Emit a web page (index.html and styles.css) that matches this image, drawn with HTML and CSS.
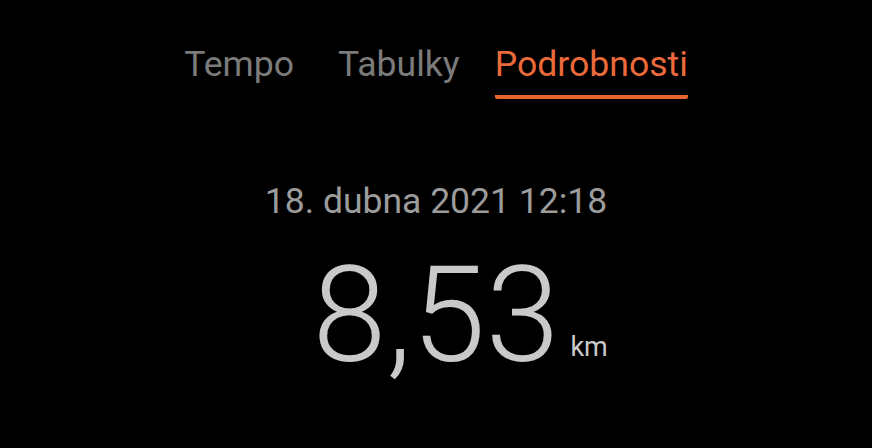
FILE: index.html
```html
<!doctype html>
<html lang="cs">
  <head>
    <meta charset="utf-8" />
    <title>Podrobnosti</title>
    <link rel="stylesheet" href="styles.css">
  </head>
  <body>
	<nav class="tabs">
		<a class="tab">Tempo</a>
		<a class="tab">Tabulky</a>
		<a class="tab active">Podrobnosti</a>
	</nav>
	<div class="date">18. dubna 2021 12:18</div>
	<div class="distance">
		<span class="value">8,53<span class="unit">km</span></span>
	</div>
  </body>
</html>
```

FILE: styles.css
```css
* {
	font-family: Roboto, "Noto Sans", sans-serif;
}

body {
	margin: 0;
	background: #000;
	width: 872px;
	height: 448px;
	overflow: hidden;
}

.tabs {
	display: flex;
	justify-content: center;
	gap: 35px;
	padding-top: 40px;
}

.tab {
	font-size: 35.6px;
	line-height: 48px;
	color: #7b7b7b;
	padding-bottom: 7px;
	border-bottom: 4px solid transparent;
}

.tab:first-child {
	margin-right: 9px;
}

.tab.active {
	color: #ea6a3b;
	border-bottom-color: #e6662f;
	border-radius: 2px;
}

.date {
	text-align: center;
	font-size: 35.5px;
	color: #9c9c9c;
	margin-top: 81px;
}

.distance {
	text-align: center;
	margin-top: 19px;
}

.value {
	position: relative;
	font-size: 133px;
	line-height: 150px;
	font-weight: 300;
	color: #c9c9c9;
}

.unit {
	position: absolute;
	left: 100%;
	bottom: 32px;
	margin-left: 11px;
	font-size: 27px;
	line-height: 27px;
	font-weight: 400;
	color: #c9c9c9;
}
```
